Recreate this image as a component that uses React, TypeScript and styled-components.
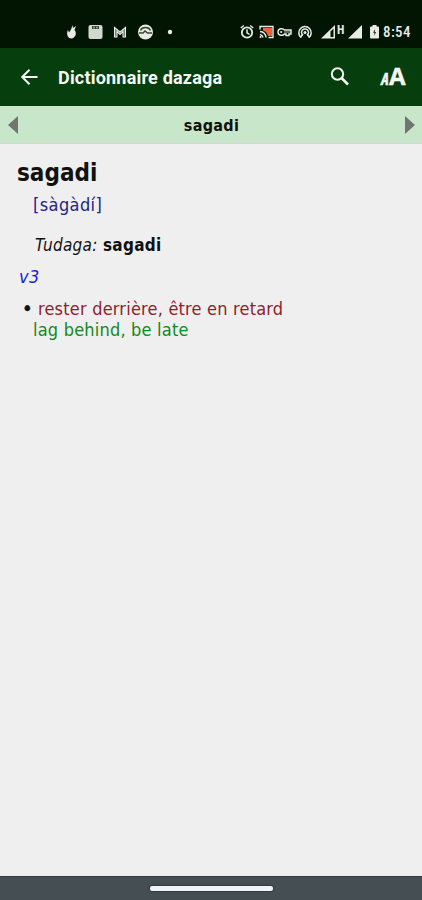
import React from "react";
import styled, { createGlobalStyle } from "styled-components";

const GlobalStyle = createGlobalStyle`
  * { box-sizing: border-box; }
  body { margin: 0; background: #efefef; }
`;

const Screen = styled.div`
  width: 422px;
  height: 900px;
  display: flex;
  flex-direction: column;
  overflow: hidden;
  background: #efefef;
  color: #111;
  font-family: "DejaVu Sans Condensed", "DejaVu Sans", sans-serif;
  font-stretch: condensed;
`;

const StatusBar = styled.header`
  height: 48px;
  flex: none;
  display: flex;
  align-items: center;
  padding: 16px 10px 0 65px;
  background: #021402;
  color: #e8ebe6;
  font-family: Roboto, sans-serif;
`;

const Glyph = styled.svg<{ $w: number; $gap?: number }>`
  display: block;
  flex: none;
  width: ${(p) => p.$w}px;
  height: 16px;
  margin-right: ${(p) => p.$gap ?? 0}px;
  overflow: visible;
`;

const Spacer = styled.div`
  flex: 1;
`;

const Network = styled.span`
  width: 10px;
  margin-right: 1px;
  padding-bottom: 4px;
  font-size: 12px;
  line-height: 12px;
  font-weight: 700;
`;

const Clock = styled.span`
  width: 29px;
  font-size: 15px;
  font-weight: 500;
  line-height: 16px;
  letter-spacing: 0.4px;
  white-space: nowrap;
`;

const AppBar = styled.div`
  height: 58px;
  flex: none;
  display: flex;
  align-items: center;
  padding: 0 16px 0 20px;
  background: #063f0d;
  color: #f5f8f4;
`;

const IconButton = styled.button<{ $w: number }>`
  width: ${(p) => p.$w}px;
  height: 24px;
  padding: 0;
  border: 0;
  display: block;
  background: none;
  color: inherit;

  svg { display: block; overflow: visible; }
`;

const Title = styled.h1`
  flex: 1;
  margin: 2px 0 0 20px;
  font: 700 18px/24px Roboto, sans-serif;
  letter-spacing: 0.2px;
  white-space: nowrap;
`;

const TextSize = styled.button`
  width: 26px;
  height: 24px;
  margin-left: 30px;
  padding: 0;
  border: 0;
  display: flex;
  align-items: baseline;
  background: none;
  color: inherit;
  font: 700 24px/22px "Open Sans", sans-serif;
  -webkit-text-stroke: 0.4px currentColor;
`;

const SmallA = styled.span`
  width: 9px;
  font-size: 16px;
  font-style: italic;
  font-stretch: condensed;
  letter-spacing: -1px;
`;

const EntryNav = styled.nav`
  height: 38px;
  flex: none;
  display: flex;
  align-items: center;
  justify-content: space-between;
  padding: 0 7px 0 8px;
  border-bottom: 1px solid #d8d5d5;
  background: #c8e6c9;
`;

const Current = styled.span`
  font-size: 16px;
  line-height: 20px;
  font-weight: 700;
  letter-spacing: 0.3px;
  padding-top: 3px;
`;

const Entry = styled.main`
  flex: 1;
  padding: 15px 18px 0;
  font-size: 18px;
  line-height: 21px;
  letter-spacing: 0.2px;
`;

const Headword = styled.h2`
  margin: 0 0 0 -1px;
  padding-top: 1px;
  font-size: 24px;
  line-height: 27px;
  font-weight: 700;
  letter-spacing: 0;
`;

const Pronunciation = styled.p`
  margin: 7px 0 0 15px;
  color: #22228b;
  letter-spacing: 0.4px;
`;

const Dialect = styled.p`
  margin: 20px 0 0 17px;
  font-size: 17px;
  line-height: 20px;
  letter-spacing: 0.3px;
`;

const PartOfSpeech = styled.p`
  margin: 11px 0 0 1px;
  color: #2020dd;
  font-style: italic;
  letter-spacing: 0.5px;
`;

const Sense = styled.div`
  margin: 11px 0 0 5px;
  display: grid;
  grid-template-columns: 10px 1fr;
`;

const Bullet = styled.span`
  color: #111;
  font-size: 20px;
  -webkit-text-stroke: 0.5px currentColor;
  margin-left: -1px;
`;

const French = styled.span`
  padding-left: 5px;
  color: #8f202b;
  white-space: nowrap;
`;

const English = styled.span`
  grid-column: 2;
  color: #108a18;
`;

const GestureBar = styled.footer`
  height: 24px;
  flex: none;
  display: flex;
  justify-content: center;
  padding-top: 9px;
  background: #444e53;
  border-top: 1px solid #2f3b3e;
`;

const Handle = styled.div`
  width: 123px;
  height: 5px;
  border-radius: 2px;
  background: #f1f4f7;
  box-shadow: 0 0 1px 1px #343b42;
`;

const Signal = ({ gap, partial }: { gap: number; partial?: boolean }) => (
  <Glyph $w={14} $gap={gap} viewBox="0 0 14 16">
    <path d="M0 14.5 14 1v13.5Z" fill="currentColor" />
    {partial && <path d="M9.5 7.5 12.5 4.5V13h-3Z" fill="#021402" />}
  </Glyph>
);

export default function App() {
  return (
    <Screen>
      <GlobalStyle />
      <StatusBar>
        <Glyph $w={13} $gap={10} viewBox="0 0 13 16">
          <path d="M6 5.5 7.500 1l.5 3 3-2-1.500 4c3 3 .5 8.500-3 8.500-4 0-5.500-5-3.500-8.500l1 2.500Z" fill="currentColor" />
        </Glyph>
        <Glyph $w={15} $gap={10} viewBox="0 0 15 16">
          <rect x=".5" y="1" width="14" height="14" rx="2" fill="#d3d7d0" />
          <path d="M4 2h7v3H4z" fill="#31402f" />
          <path d="M6 2.500v2M9 2.500v2" stroke="#e8ebe6" />
        </Glyph>
        <Glyph $w={14} $gap={11} viewBox="0 0 14 16">
          <path d="M1.500 13V3.500L7 8l5.500-4.500V13H10V7.500l-3 3-3-3V13Z" fill="#717970" stroke="currentColor" strokeWidth="1.100" />
        </Glyph>
        <Glyph $w={15} $gap={15} viewBox="0 0 15 16">
          <circle cx="7.500" cy="8" r="7.500" fill="currentColor" />
          <path d="M2.500 6.500c1.500-4 8.500-4 10 0M1 9h4l2-2 2.500 2H14" fill="none" stroke="#354632" strokeWidth="1.500" />
        </Glyph>
        <Glyph $w={4} viewBox="0 0 4 16"><circle cx="2" cy="8" r="2.200" fill="currentColor" /></Glyph>
        <Spacer />
        <Glyph $w={14} $gap={5} viewBox="0 0 14 16">
          <circle cx="7" cy="8.500" r="5.200" fill="none" stroke="currentColor" strokeWidth="1.800" />
          <path d="m.8 4 3-2.500M13.200 4l-3-2.500M7 5.300v3.500l2.500 1.500" fill="none" stroke="currentColor" strokeWidth="1.500" />
        </Glyph>
        <Glyph $w={15} $gap={3} viewBox="0 0 15 16">
          <path d="M4 4h9v8H9C8 9 6.500 7 4 6.500Z" fill="#ed613b" />
          <path d="M1 5.500V2.500h13v11H9.500M1 7.500q5.500.5 6 6M1 10.500q2.500.5 3 3" fill="none" stroke="currentColor" strokeWidth="1.400" />
          <circle cx="1.500" cy="13" r="1" fill="currentColor" />
        </Glyph>
        <Glyph $w={15} $gap={6} viewBox="0 0 15 16">
          <path d="M7.500 6C6 4 1 4 1 8s5 4 6.500 2H9v1.500h3V10h2V6Z" fill="none" stroke="currentColor" strokeWidth="1.500" />
          <circle cx="4.200" cy="8" r="1.100" fill="currentColor" />
          <path d="M7 8h6" stroke="currentColor" strokeWidth=".8" />
        </Glyph>
        <Glyph $w={14} $gap={9} viewBox="0 0 14 16">
          <path d="M3 13.500A6.200 6.200 0 1 1 11 13.500M4.800 11.200a3.500 3.500 0 1 1 4.400 0" fill="none" stroke="currentColor" strokeWidth="1.500" />
          <circle cx="7" cy="8.500" r="1.500" fill="currentColor" />
          <path d="M5 10 2.500 13.500M9 10l2.500 3.500" stroke="currentColor" strokeWidth="1.300" />
        </Glyph>
        <Signal gap={2} partial />
        <Network>H</Network>
        <Signal gap={8} />
        <Glyph $w={9} $gap={4} viewBox="0 0 9 16">
          <path d="M2.500 1h4v1.500H8q1 0 1 1v10q0 1-1 1H1q-1 0-1-1v-10q0-1 1-1h1.500Z" fill="currentColor" />
          <path d="M5.200 5 3 8.800h1.500L4 12l2.200-4H4.800Z" fill="#233020" />
        </Glyph>
        <Clock>8:54</Clock>
      </StatusBar>

      <AppBar>
        <IconButton $w={18} aria-label="Back">
          <svg width="18" height="22" viewBox="0 0 18 22">
            <path d="M17.500 11H2.500M9.500 3.700 2.200 11l7.300 7.300" fill="none" stroke="currentColor" strokeWidth="2" />
          </svg>
        </IconButton>
        <Title>Dictionnaire dazaga</Title>
        <IconButton $w={20} aria-label="Search">
          <svg width="20" height="22" viewBox="0 0 20 22">
            <circle cx="7.500" cy="8" r="5.700" fill="none" stroke="currentColor" strokeWidth="2" />
            <path d="m11.500 12 6.500 6.500" stroke="currentColor" strokeWidth="2.500" />
          </svg>
        </IconButton>
        <TextSize aria-label="Text size"><SmallA>A</SmallA><span>A</span></TextSize>
      </AppBar>

      <EntryNav>
        <svg width="10" height="18" viewBox="0 0 10 18"><path d="M10 0v18L0 9Z" fill="#707570" /></svg>
        <Current>sagadi</Current>
        <svg width="10" height="18" viewBox="0 0 10 18"><path d="M0 0v18l10-9Z" fill="#707570" /></svg>
      </EntryNav>

      <Entry>
        <Headword>sagadi</Headword>
        <Pronunciation>[sàgàdí]</Pronunciation>
        <Dialect><em>Tudaga:</em> <strong>sagadi</strong></Dialect>
        <PartOfSpeech>v3</PartOfSpeech>
        <Sense>
          <Bullet>•</Bullet>
          <French>rester derrière, être en retard</French>
          <English>lag behind, be late</English>
        </Sense>
      </Entry>
      <GestureBar><Handle /></GestureBar>
    </Screen>
  );
}
